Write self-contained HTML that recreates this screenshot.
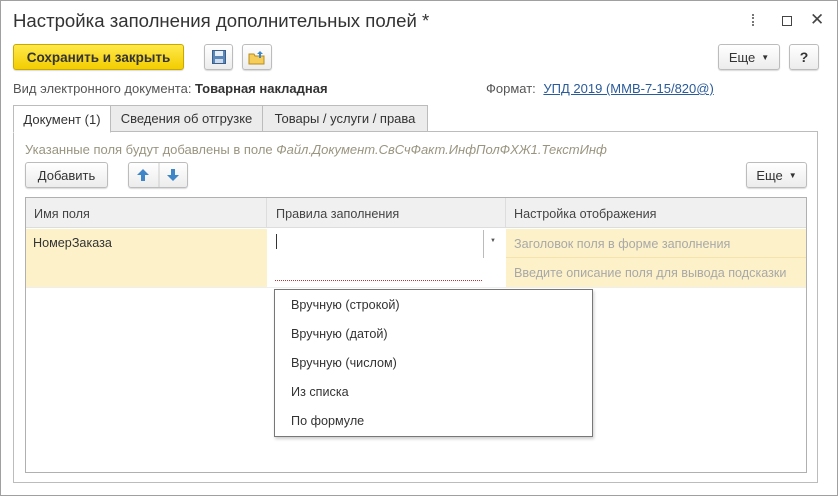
<!DOCTYPE html>
<html><head><meta charset="utf-8"><style>
*{box-sizing:border-box;margin:0;padding:0}
body{width:838px;height:496px;background:#fff;font-family:"Liberation Sans",Arial,sans-serif;font-size:13px;color:#333;position:relative;overflow:hidden}
.a{position:absolute}
.btn{position:absolute;border:1px solid #bcbcbc;border-radius:3px;background:linear-gradient(#fff,#ececec);box-shadow:0 1px 1px rgba(0,0,0,.15);display:flex;align-items:center;justify-content:center;color:#333}
.tab{position:absolute;top:105px;height:27px;border:1px solid #bcbcbc;background:#ececec;display:flex;align-items:center;justify-content:center;color:#333}
.n{display:inline-block;transform:scaleX(.97);transform-origin:left center;white-space:nowrap}
</style></head><body>
<div class="a" style="left:0;top:0;width:838px;height:496px;border:1px solid #a0a0a0"></div>
<div class="a" style="left:13px;top:10px;font-size:18.6px;color:#333">Настройка заполнения дополнительных полей *</div>
<div class="a" style="left:752px;top:14px;width:2px;height:12px;border-left:2px dotted #777"></div>
<div class="a" style="left:782px;top:16px;width:10px;height:10px;border:1px solid #444"></div>
<div class="a" style="left:810px;top:10px;font-size:17px;color:#444">✕</div>

<div class="btn" style="left:13px;top:44px;width:171px;height:26px;background:linear-gradient(#ffe94a,#f3cd00);border-color:#c9a800;font-weight:bold;color:#333;font-size:13.5px">Сохранить и закрыть</div>
<div class="btn" style="left:204px;top:44px;width:29px;height:26px"><svg width="14" height="14"><rect x="0.5" y="0.5" width="13" height="13" fill="#5b86b8" stroke="#3a5f8c"/><rect x="3" y="1" width="8" height="5" fill="#e8eef5"/><rect x="3" y="9" width="8" height="4" fill="#cfdbe8"/></svg></div>
<div class="btn" style="left:242px;top:44px;width:30px;height:26px"><svg width="18" height="15"><path d="M1 4h5l1 2h9v8H1z" fill="#f6cc5a" stroke="#b88d1c"/><path d="M12 1l3 3h-2v4h-2V4H9z" fill="#3f86c9"/></svg></div>
<div class="btn" style="left:718px;top:44px;width:62px;height:26px">Еще <span style="font-size:8px;margin-left:6px">▼</span></div>
<div class="btn" style="left:789px;top:44px;width:30px;height:26px;font-weight:bold;font-size:14px">?</div>

<div class="a" style="left:13px;top:81px;color:#555">Вид электронного документа: <b style="color:#333">Товарная накладная</b></div>
<div class="a" style="left:486px;top:81px;color:#555">Формат: <span style="color:#2a5b9a;text-decoration:underline;margin-left:4px">УПД 2019 (ММВ-7-15/820@)</span></div>

<div class="a" style="left:13px;top:131px;width:805px;height:352px;border:1px solid #bcbcbc"></div>
<div class="tab" style="left:13px;width:98px;background:#fff;border-bottom-color:#fff;height:28px">Документ (1)</div>
<div class="tab" style="left:110px;width:153px">Сведения об отгрузке</div>
<div class="tab" style="left:262px;width:166px">Товары / услуги / права</div>

<div class="a" style="left:25px;top:142px;color:#999580">Указанные поля будут добавлены в поле <i>Файл.Документ.СвСчФакт.ИнфПолФХЖ1.ТекстИнф</i></div>
<div class="btn" style="left:25px;top:162px;width:83px;height:26px">Добавить</div>
<div class="btn" style="left:128px;top:162px;width:60px;height:26px"><svg width="60" height="24"><path d="M14 6l-6 6h4v6h4v-6h4z" fill="#3f86c9"/><line x1="30" y1="0" x2="30" y2="24" stroke="#ccc"/><path d="M44 18l-6-6h4V6h4v6h4z" fill="#3f86c9"/></svg></div>
<div class="btn" style="left:746px;top:162px;width:61px;height:26px">Еще <span style="font-size:8px;margin-left:6px">▼</span></div>

<div class="a" style="left:25px;top:197px;width:782px;height:276px;border:1px solid #b0b0b0"></div>
<div class="a" style="left:26px;top:198px;width:780px;height:30px;background:#f0f0f0;border-bottom:1px solid #ddd"></div>
<div class="a" style="left:266px;top:198px;width:1px;height:30px;background:#ddd"></div>
<div class="a" style="left:505px;top:198px;width:1px;height:30px;background:#ddd"></div>
<div class="a" style="left:34px;top:206px;color:#444"><span class="n">Имя поля</span></div>
<div class="a" style="left:276px;top:206px;color:#444"><span class="n">Правила заполнения</span></div>
<div class="a" style="left:514px;top:206px;color:#444"><span class="n">Настройка отображения</span></div>

<div class="a" style="left:26px;top:229px;width:241px;height:58px;background:#fdf1c9"></div>
<div class="a" style="left:506px;top:229px;width:300px;height:58px;background:#fdf1c9"></div>
<div class="a" style="left:506px;top:257px;width:300px;height:1px;background:#f5e2ad"></div>
<div class="a" style="left:26px;top:287px;width:780px;height:1px;background:#eee"></div>
<div class="a" style="left:33px;top:235px;color:#333"><span class="n">НомерЗаказа</span></div>
<div class="a" style="left:276px;top:234px;width:1px;height:15px;background:#333"></div>
<div class="a" style="left:483px;top:230px;width:1px;height:28px;background:#bbb"></div>
<div class="a" style="left:490px;top:238px;font-size:6px;color:#555">▼</div>
<div class="a" style="left:275px;top:280px;width:207px;border-top:1px dotted #b33"></div>
<div class="a" style="left:514px;top:236px;color:#a8a8a8"><span class="n">Заголовок поля в форме заполнения</span></div>
<div class="a" style="left:514px;top:265px;color:#a8a8a8"><span class="n">Введите описание поля для вывода подсказки</span></div>

<div class="a" style="left:274px;top:289px;width:319px;height:148px;border:1px solid #777;background:#fff;box-shadow:1px 2px 3px rgba(0,0,0,.2);color:#333">
<div class="a" style="left:16px;top:7px"><span class="n">Вручную (строкой)</span></div>
<div class="a" style="left:16px;top:36px"><span class="n">Вручную (датой)</span></div>
<div class="a" style="left:16px;top:65px"><span class="n">Вручную (числом)</span></div>
<div class="a" style="left:16px;top:94px"><span class="n">Из списка</span></div>
<div class="a" style="left:16px;top:123px"><span class="n">По формуле</span></div>
</div>
</body></html>
